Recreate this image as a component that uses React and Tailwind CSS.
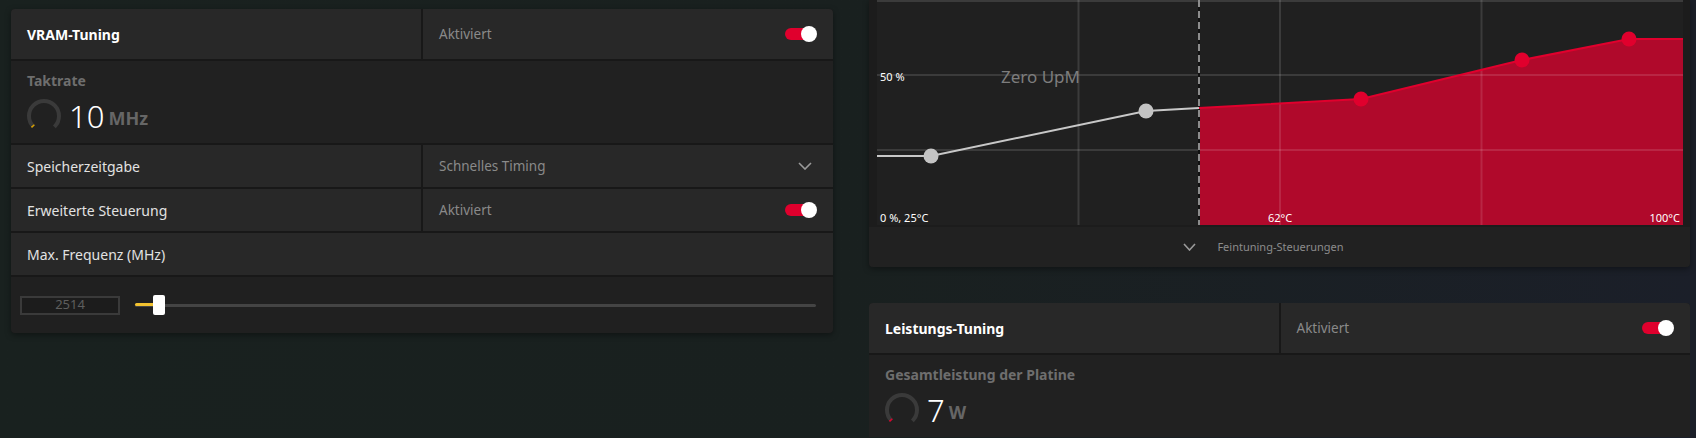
import React from 'react';

const font = { fontFamily: '"Noto Sans", "Open Sans", sans-serif' };

function Toggle() {
  return (
    <div className="relative w-[32px] h-[16px]">
      <div className="absolute left-0 top-[2px] w-[26px] h-[12px] rounded-full bg-[#e0002d]" />
      <div className="absolute right-0 top-0 w-[16px] h-[16px] rounded-full bg-white" />
    </div>
  );
}

function Chevron({ w = 14, h = 8, color = '#9a9a9a' }) {
  return (
    <svg width={w} height={h} viewBox={`0 0 ${w} ${h}`} fill="none">
      <polyline points={`1,1 ${w / 2},${h - 1} ${w - 1},1`} stroke={color} strokeWidth="1.6" />
    </svg>
  );
}

function Gauge({ tick }) {
  const r = 15;
  const c = 2 * Math.PI * r;
  return (
    <svg width="36" height="36" viewBox="0 0 36 36">
      <circle cx="18" cy="18" r={r} fill="none" stroke="#3a3a3a" strokeWidth="4"
        strokeDasharray={`${c * 0.75} ${c}`} transform="rotate(135 18 18)" />
      <circle cx="18" cy="18" r={r} fill="none" stroke={tick} strokeWidth="4"
        strokeDasharray={`1.5 ${c}`} transform="rotate(135 18 18)" />
    </svg>
  );
}

function HeaderRow({ title }) {
  return (
    <div className="grid grid-cols-2 gap-[2px] h-[50px]">
      <div className="bg-[#282828] flex items-center pl-[16px] text-[14px] font-bold text-white">{title}</div>
      <div className="bg-[#282828] flex items-center justify-between pl-[16px] pr-[16px] text-[13.5px] text-[#8a8a8a]">
        <span>Aktiviert</span>
        <Toggle />
      </div>
    </div>
  );
}

function Metric({ label, value, unit, tick }) {
  return (
    <div className="bg-[#212121] h-[82px] pl-[16px] pt-[10px]">
      <div className="text-[14px] font-bold text-[#6e6e6e] leading-[20px]">{label}</div>
      <div className="flex items-center mt-[6px] -ml-[1px]">
        <Gauge tick={tick} />
        <span className="ml-[7px] text-[31px] font-light text-white leading-[34px]">{value}</span>
        <span className="ml-[4px] text-[18px] font-bold text-[#666666] leading-[34px] mt-[4px]">{unit}</span>
      </div>
    </div>
  );
}

function Chart() {
  const W = 806;
  const H = 225;
  const red = [[322, 108], [484, 99], [645, 60], [752, 39], [W, 39]];
  const fill = `M322,${H} ` + red.map((p) => `L${p[0]},${p[1]}`).join(' ') + ` L${W},${H} Z`;
  const line = 'M' + red.map((p) => `${p[0]},${p[1]}`).join(' L');
  return (
    <div className="relative bg-[#202020] h-[225px] overflow-hidden">
      <svg width={W} height={H} viewBox={`0 0 ${W} ${H}`} className="block">
        <path d={fill} fill="#b0092b" />
        {[201.5, 403, 604.5].map((x) => (
          <line key={x} x1={x} y1="0" x2={x} y2={H} stroke="rgba(255,255,255,0.12)" strokeWidth="2" />
        ))}
        {[1, 75, 150].map((y) => (
          <line key={y} x1="0" y1={y} x2={W} y2={y} stroke="rgba(255,255,255,0.12)" strokeWidth="2" />
        ))}
        <line x1="322" y1="0" x2="322" y2={H} stroke="#111" strokeWidth="2" />
        <line x1="322" y1="0" x2="322" y2={H} stroke="#8c8c8c" strokeWidth="2" strokeDasharray="7 4" />
        <path d={line} fill="none" stroke="#e0002d" strokeWidth="2" />
        <polyline points="0,156 54,156 269,111 322,108" fill="none" stroke="#c8c8c8" strokeWidth="2" />
        <circle cx="54" cy="156" r="7.5" fill="#c4c4c4" />
        <circle cx="269" cy="111" r="7.5" fill="#c4c4c4" />
        {red.slice(1, 4).map((p) => (
          <circle key={p[0]} cx={p[0]} cy={p[1]} r="7.5" fill="#e0002d" />
        ))}
      </svg>
      <span className="absolute left-[3px] top-[70px] text-[11px] text-white leading-[14px]">50 %</span>
      <span className="absolute left-[124px] top-[65px] text-[17px] text-[#7d7d7d] leading-[24px]">Zero UpM</span>
      <span className="absolute left-[3px] top-[211px] text-[11px] text-white leading-[14px]">0 %, 25°C</span>
      <span className="absolute left-[391px] top-[211px] text-[11px] text-white leading-[14px]">62°C</span>
      <span className="absolute right-[3px] top-[211px] text-[11px] text-white leading-[14px]">100°C</span>
    </div>
  );
}

export default function App() {
  return (
    <div style={font} className="h-[438px] w-[1696px] overflow-hidden bg-gradient-to-r from-[#19211f] via-[#19201f] to-[#1b1f29] flex items-start pl-[11px]">
      {/* VRAM panel */}
      <div className="mt-[9px] w-[822px] bg-[#181818] rounded-[4px] overflow-hidden flex flex-col gap-[2px] shadow-[0_2px_6px_rgba(0,0,0,0.4)]">
        <HeaderRow title="VRAM-Tuning" />
        <Metric label="Taktrate" value="10" unit="MHz" tick="#d8a000" />
        <div className="grid grid-cols-2 gap-[2px] h-[42px]">
          <div className="bg-[#282828] flex items-center pl-[16px] text-[14px] text-[#e2e2e2]">Speicherzeitgabe</div>
          <div className="bg-[#282828] flex items-center justify-between pl-[16px] pr-[21px] text-[13.5px] text-[#8a8a8a]">
            <span>Schnelles Timing</span>
            <Chevron />
          </div>
        </div>
        <div className="grid grid-cols-2 gap-[2px] h-[42px]">
          <div className="bg-[#282828] flex items-center pl-[16px] text-[14px] text-[#e2e2e2]">Erweiterte Steuerung</div>
          <div className="bg-[#282828] flex items-center justify-between pl-[16px] pr-[16px] text-[13.5px] text-[#8a8a8a]">
            <span>Aktiviert</span>
            <Toggle />
          </div>
        </div>
        <div className="bg-[#282828] h-[42px] flex items-center pl-[16px] text-[14px] text-[#e2e2e2]">Max. Frequenz (MHz)</div>
        <div className="bg-[#202020] h-[56px] flex items-center pl-[9px] pr-[17px]">
          <div className="w-[100px] h-[19px] border-2 border-[#3a3a3a] bg-[#1c1c1c] flex items-center justify-center text-[13px] text-[#5e5e5e]">2514</div>
          <div className="relative flex-1 ml-[15px] h-[20px] flex items-center">
            <div className="w-full h-[3px] rounded-full bg-[#444444]" />
            <div className="absolute left-0 top-[8px] w-[20px] h-[3px] rounded-full bg-[#f2c230]" />
            <div className="absolute left-[18px] top-0 w-[12px] h-[20px] rounded-[2px] bg-white" />
          </div>
        </div>
      </div>

      {/* Right column */}
      <div className="ml-[36px] w-[821px] flex flex-col gap-[36px]">
        <div className="bg-[#1c1c1c] rounded-b-[4px] overflow-hidden shadow-[0_2px_6px_rgba(0,0,0,0.4)]">
          <div className="pl-[8px] pr-[7px]">
            <Chart />
          </div>
          <div className="mt-[2px] h-[40px] bg-[#212121] flex items-center justify-center pr-[32px]">
            <Chevron w={13} h={8} color="#9a9a9a" />
            <span className="ml-[21px] text-[11px] text-[#8c8c8c]">Feintuning-Steuerungen</span>
          </div>
        </div>
        <div className="bg-[#181818] rounded-t-[4px] overflow-hidden flex flex-col gap-[2px]">
          <HeaderRow title="Leistungs-Tuning" />
          <Metric label="Gesamtleistung der Platine" value="7" unit="W" tick="#e0002d" />
        </div>
      </div>
    </div>
  );
}
